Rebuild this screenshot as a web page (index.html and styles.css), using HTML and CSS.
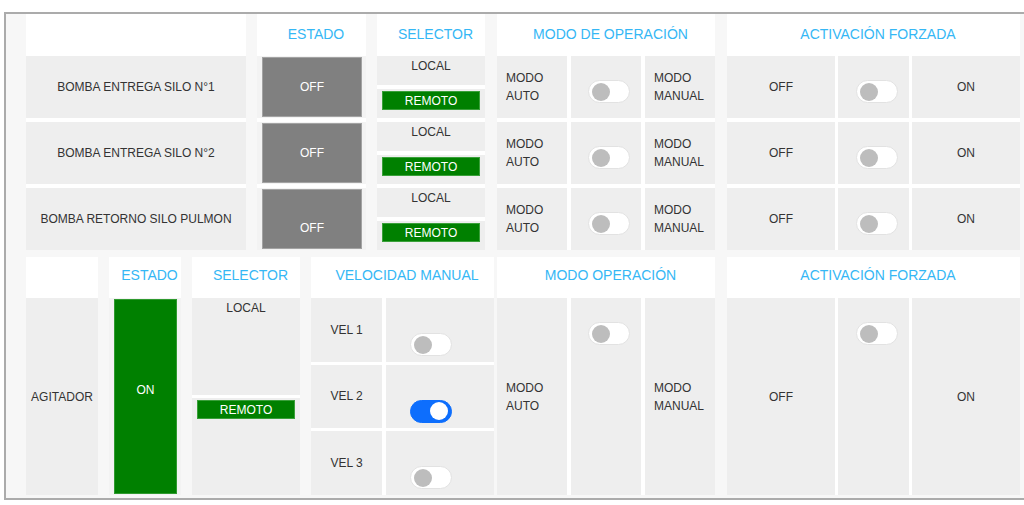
FILE: index.html
```html
<!DOCTYPE html>
<html lang="es">
<head>
<meta charset="utf-8">
<title>Panel</title>
<link rel="stylesheet" href="styles.css">
</head>
<body>
<div class="frame">
  <section class="section top">
    <div class="group col-name">
      <div class="ghead"></div>
      <div class="rows">
        <div class="cell center">BOMBA ENTREGA SILO N°1</div>
        <div class="cell center">BOMBA ENTREGA SILO N°2</div>
        <div class="cell center">BOMBA RETORNO SILO PULMON</div>
      </div>
    </div>
    <div class="group col-estado">
      <div class="ghead">ESTADO</div>
      <div class="rows">
        <div class="cell lampcell"><div class="lamp off">OFF</div></div>
        <div class="cell lampcell"><div class="lamp off">OFF</div></div>
        <div class="cell lampcell"><div class="lamp off low">OFF</div></div>
      </div>
    </div>
    <div class="group col-sel">
      <div class="ghead">SELECTOR</div>
      <div class="rows">
        <div class="selector">
          <div class="cell opt">LOCAL</div>
          <div class="cell opt"><div class="tag">REMOTO</div></div>
        </div>
        <div class="selector">
          <div class="cell opt">LOCAL</div>
          <div class="cell opt"><div class="tag">REMOTO</div></div>
        </div>
        <div class="selector">
          <div class="cell opt">LOCAL</div>
          <div class="cell opt"><div class="tag">REMOTO</div></div>
        </div>
      </div>
    </div>
    <div class="group col-modo">
      <div class="ghead">MODO DE OPERACIÓN</div>
      <div class="rows">
        <div class="triple modo">
          <div class="cell left">MODO<br>AUTO</div>
          <div class="cell sw-cell"><span class="switch"><span class="knob"></span></span></div>
          <div class="cell left">MODO<br>MANUAL</div>
        </div>
        <div class="triple modo">
          <div class="cell left">MODO<br>AUTO</div>
          <div class="cell sw-cell"><span class="switch"><span class="knob"></span></span></div>
          <div class="cell left">MODO<br>MANUAL</div>
        </div>
        <div class="triple modo">
          <div class="cell left">MODO<br>AUTO</div>
          <div class="cell sw-cell"><span class="switch"><span class="knob"></span></span></div>
          <div class="cell left">MODO<br>MANUAL</div>
        </div>
      </div>
    </div>
    <div class="group col-act">
      <div class="ghead">ACTIVACIÓN FORZADA</div>
      <div class="rows">
        <div class="triple act">
          <div class="cell center">OFF</div>
          <div class="cell sw-cell sw-act"><span class="switch"><span class="knob"></span></span></div>
          <div class="cell center">ON</div>
        </div>
        <div class="triple act">
          <div class="cell center">OFF</div>
          <div class="cell sw-cell sw-act"><span class="switch"><span class="knob"></span></span></div>
          <div class="cell center">ON</div>
        </div>
        <div class="triple act">
          <div class="cell center">OFF</div>
          <div class="cell sw-cell sw-act"><span class="switch"><span class="knob"></span></span></div>
          <div class="cell center">ON</div>
        </div>
      </div>
    </div>
  </section>

  <section class="section bottom">
    <div class="group col-name">
      <div class="ghead"></div>
      <div class="body cell center">AGITADOR</div>
    </div>
    <div class="group col-estado">
      <div class="ghead">ESTADO</div>
      <div class="body cell lampcell"><div class="lamp on">ON</div></div>
    </div>
    <div class="group col-sel">
      <div class="ghead">SELECTOR</div>
      <div class="body selector tall">
        <div class="cell opt">LOCAL</div>
        <div class="cell opt"><div class="tag">REMOTO</div></div>
      </div>
    </div>
    <div class="group col-vel">
      <div class="ghead">VELOCIDAD MANUAL</div>
      <div class="body vel-rows">
        <div class="vel-row">
          <div class="cell center">VEL 1</div>
          <div class="cell sw-cell sw-vel"><span class="switch"><span class="knob"></span></span></div>
        </div>
        <div class="vel-row">
          <div class="cell center">VEL 2</div>
          <div class="cell sw-cell sw-vel"><span class="switch active"><span class="knob"></span></span></div>
        </div>
        <div class="vel-row">
          <div class="cell center">VEL 3</div>
          <div class="cell sw-cell sw-vel"><span class="switch"><span class="knob"></span></span></div>
        </div>
      </div>
    </div>
    <div class="group col-modo">
      <div class="ghead">MODO OPERACIÓN</div>
      <div class="body triple modo">
        <div class="cell left">MODO<br>AUTO</div>
        <div class="cell sw-cell"><span class="switch"><span class="knob"></span></span></div>
        <div class="cell left">MODO<br>MANUAL</div>
      </div>
    </div>
    <div class="group col-act">
      <div class="ghead">ACTIVACIÓN FORZADA</div>
      <div class="body triple act">
        <div class="cell center">OFF</div>
        <div class="cell sw-cell sw-act"><span class="switch"><span class="knob"></span></span></div>
        <div class="cell center">ON</div>
      </div>
    </div>
  </section>
</div>
</body>
</html>
```

FILE: styles.css
```css
html, body {
  margin: 0;
  padding: 0;
  background: #ffffff;
  overflow: hidden;
}

body {
  font-family: "Liberation Sans", Arial, sans-serif;
  font-size: 12px;
  color: #333333;
}

.frame {
  margin: 12px 0 0 4px;
  border: 2px solid #ababab;
  border-right: 0;
  width: 1030px;
  height: 484px;
  background: #f7f7f7;
  padding-left: 20px;
  display: flex;
  flex-direction: column;
}

.section {
  display: flex;
}

.top {
  height: 236px;
}

.bottom {
  margin-top: 7px;
  height: 238px;
}

.group {
  display: flex;
  flex-direction: column;
  background: #ffffff;
}

.ghead {
  background: #ffffff;
  color: #35b7f5;
  font-size: 14px;
  text-align: center;
  padding-left: 9px;
  flex: none;
}

.top .ghead {
  height: 42px;
  line-height: 41px;
}

.bottom .ghead {
  height: 40px;
  line-height: 37px;
  margin-bottom: 1px;
}

/* column widths — top */
.top .col-name { width: 220px; }
.top .col-estado { width: 109px; margin-left: 11px; }
.top .col-sel { width: 108px; margin-left: 11px; }
.top .col-modo { width: 218px; margin-left: 12px; }
.top .col-act { width: 293px; margin-left: 12px; }

/* column widths — bottom */
.bottom .col-name { width: 72px; }
.bottom .col-estado { width: 72px; margin-left: 11px; }
.bottom .col-sel { width: 108px; margin-left: 11px; }
.bottom .col-vel { width: 183px; margin-left: 11px; }
.bottom .col-modo { width: 218px; margin-left: 3px; }
.bottom .col-act { width: 293px; margin-left: 12px; }

.rows {
  display: grid;
  grid-template-rows: repeat(3, 62px);
  row-gap: 4px;
}

.body {
  flex: 1;
  min-height: 0;
}

.cell {
  background: #eeeeee;
  min-width: 0;
}

.center {
  display: flex;
  align-items: center;
  justify-content: center;
  text-align: center;
}

.left {
  display: flex;
  align-items: center;
  padding-left: 9px;
  line-height: 18px;
}

/* estado lamps */
.lampcell {
  background: #f3f3f3;
  padding: 1px 4px 1px 5px;
  display: flex;
}

.lamp {
  flex: 1;
  display: flex;
  align-items: center;
  justify-content: center;
  color: #ffffff;
  font-size: 12px;
}

.lamp.off {
  background: #808080;
  border: 1px solid #a3a3a3;
}

.lamp.low {
  padding-top: 18px;
}

.lamp.on {
  background: #008000;
  border: 1px solid #2f9a2f;
  padding-bottom: 13px;
}

/* selector */
.selector {
  display: grid;
  grid-template-rows: 1fr 1fr;
  row-gap: 4px;
}

.selector.tall {
  row-gap: 3px;
}

.opt {
  text-align: center;
  line-height: 14px;
  padding: 3px 5px 0 5px;
}

.opt .tag {
  margin-top: -1px;
}

.tag {
  background: #008000;
  border: 1px solid #3aa03a;
  color: #ffffff;
  height: 19px;
  line-height: 18px;
  text-align: center;
  box-sizing: border-box;
}

/* triples */
.triple {
  display: grid;
}

.triple.modo {
  grid-template-columns: 1fr 1fr 1fr;
  column-gap: 4px;
}

.triple.act {
  grid-template-columns: 108px 1fr 108px;
  column-gap: 3px;
}

/* switches */
.sw-cell {
  padding: 24px 0 0 17px;
}

.sw-act {
  padding-left: 18px;
}

.sw-vel {
  padding: 35px 0 0 24px;
}

.switch {
  display: flex;
  align-items: center;
  box-sizing: border-box;
  width: 42px;
  height: 23px;
  padding: 0 3px;
  border-radius: 12px;
  background: #ffffff;
  border: 1px solid #e2e2e2;
}

.knob {
  width: 18px;
  height: 18px;
  border-radius: 50%;
  background: #bdbdbd;
}

.switch.active {
  background: #0d6efd;
  border-color: #0d6efd;
  justify-content: flex-end;
}

.switch.active .knob {
  background: #ffffff;
}

/* velocidad */
.vel-rows {
  display: grid;
  grid-template-rows: 1fr 1fr 1fr;
  row-gap: 3px;
}

.vel-row {
  display: grid;
  grid-template-columns: 71px 1fr;
  column-gap: 4px;
}
```
